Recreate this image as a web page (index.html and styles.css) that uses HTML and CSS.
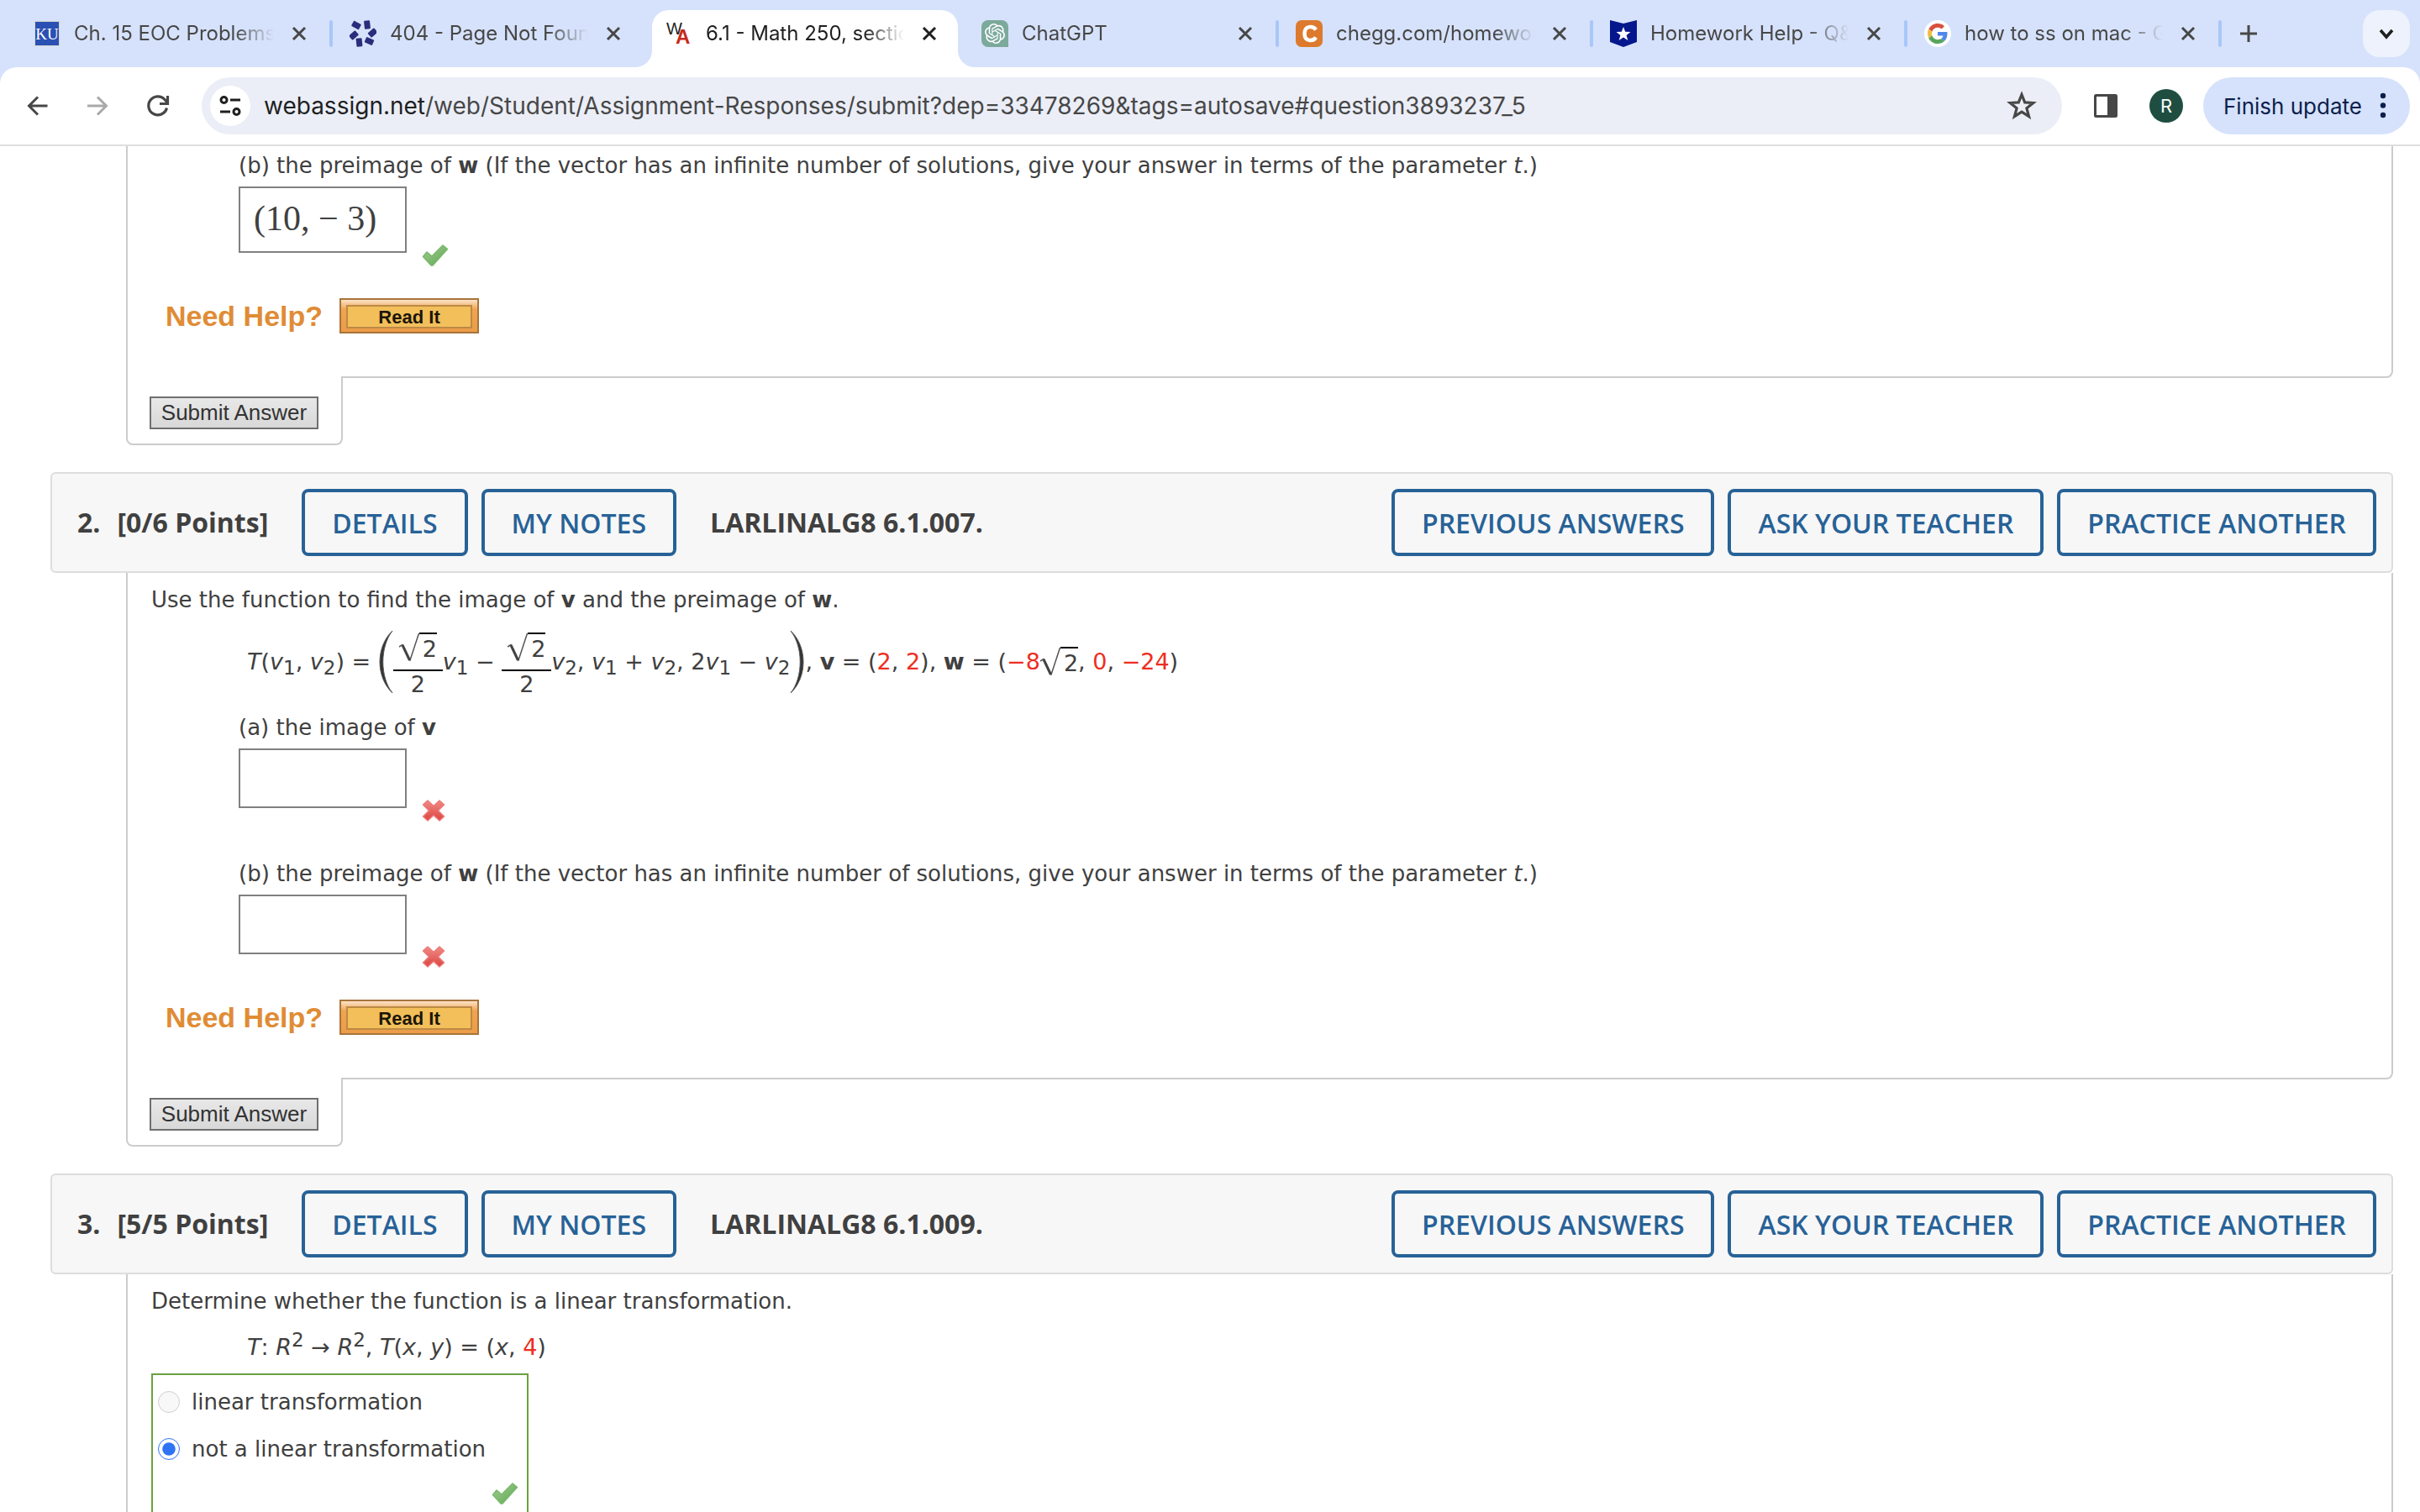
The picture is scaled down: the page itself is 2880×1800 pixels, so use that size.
FILE: index.html
```
<!DOCTYPE html>
<html lang="en">
<head>
    <meta charset="UTF-8">
    <meta name="viewport" content="width=device-width, initial-scale=1.0">
    <title>6.1 - Math 250, section 6</title>
    <link rel="stylesheet" href="styles.css">
</head>
<body>
    <svg width="0" height="0" class="defs">
        <defs>
            <linearGradient id="greenFill" x1="0" y1="0" x2="1" y2="1">
                <stop offset="0" stop-color="#a3d191"/>
                <stop offset="1" stop-color="#5fa354"/>
            </linearGradient>
            <linearGradient id="redFill" x1="0" y1="0" x2="0" y2="1">
                <stop offset="0" stop-color="#f08a86"/>
                <stop offset="1" stop-color="#dc4540"/>
            </linearGradient>
        </defs>
        <symbol id="close" viewBox="0 0 32 32">
            <path d="M9 9l14 14M23 9L9 23" stroke="currentColor" stroke-width="3" fill="none"/>
        </symbol>
        <symbol id="check" viewBox="0 0 32 26">
            <path d="M1.500 14.500L6 9l6 5L25 1l5.500 4.500L13 25h-2z" fill="url(#greenFill)" stroke="#79b96c" stroke-width="1.500" stroke-linejoin="round"/>
        </symbol>
        <symbol id="cross" viewBox="0 0 28 26">
            <path d="M7 1l7 6.500L21 1l5.500 5-7 7 7 7-5.500 5-7-6.500L7 25l-5.500-5 7-7-7-7z" fill="url(#redFill)" stroke="#ec7a76" stroke-width="1.500" stroke-linejoin="round"/>
        </symbol>
        <symbol id="radical" viewBox="0 0 24 34">
            <path d="M0 17l4-2.500L13 33 23.500 1" stroke="#555" stroke-width="1.500" fill="none"/>
            <path d="M4 15l8.500 18" stroke="#444" stroke-width="3" fill="none"/>
        </symbol>
        <symbol id="paren" viewBox="0 0 18 76">
            <path d="M17 1C-3 20-3 56 17 75 2 56 2 20 17 1z" fill="#333" stroke="#555" stroke-width="1"/>
        </symbol>
    </svg>

    <header class="tab-strip">
        <div class="tab first">
            <svg class="favicon" viewBox="0 0 32 32">
                <rect x="1" y="1" width="30" height="30" fill="#d5d3cf"/>
                <rect x="2" y="2" width="28" height="28" fill="#2a50b4"/>
                <text x="16" y="23" class="fav-ku">KU</text>
            </svg>
            <span class="tab-title">Ch. 15 EOC Problems</span>
            <button class="tab-close" aria-label="Close tab"><svg><use href="#close"/></svg></button>
        </div>
        <div class="tab">
            <svg class="favicon" viewBox="0 0 32 32" fill="#292e7c">
                <rect x="-5" y="-3.500" width="10" height="7" rx="1" transform="translate(8 6) rotate(28)"/>
                <rect x="-5" y="-3.500" width="10" height="7" rx="1" transform="translate(21 5.500) rotate(84)"/>
                <rect x="-5" y="-3.500" width="10" height="7" rx="1" transform="translate(27.500 15) rotate(-42)"/>
                <rect x="-5" y="-3.500" width="10" height="7" rx="1" transform="translate(23.500 25) rotate(25)"/>
                <rect x="-5" y="-3.500" width="10" height="7" rx="1" transform="translate(11.500 26.500) rotate(84)"/>
                <rect x="-5" y="-3.500" width="10" height="7" rx="1" transform="translate(5 18) rotate(-42)"/>
            </svg>
            <span class="tab-title">404 - Page Not Found</span>
            <button class="tab-close" aria-label="Close tab"><svg><use href="#close"/></svg></button>
        </div>
        <div class="tab active">
            <svg class="tab-shape" viewBox="0 0 404 68"><path d="M0 68A20 20 0 0 0 20 48V20A20 20 0 0 1 40 0H364A20 20 0 0 1 384 20V48A20 20 0 0 0 404 68Z" fill="#fff"/></svg>
            <svg class="favicon" viewBox="0 0 32 32">
                <text x="1" y="17" class="fav-w">W</text>
                <text x="12" y="28" class="fav-a">A</text>
            </svg>
            <span class="tab-title">6.1 - Math 250, section 6</span>
            <button class="tab-close" aria-label="Close tab"><svg><use href="#close"/></svg></button>
        </div>
        <div class="tab after-active">
            <svg class="favicon" viewBox="0 0 32 32">
                <path d="M8 0h16a8 8 0 0 1 8 8v24H8a8 8 0 0 1-8-8V8a8 8 0 0 1 8-8z" fill="#7ba99b"/>
                <g transform="translate(4 4)"><path fill="#fff" d="M22.2819 9.8211a5.9847 5.9847 0 0 0-.5157-4.9108 6.0462 6.0462 0 0 0-6.5098-2.9A6.0651 6.0651 0 0 0 4.9807 4.1818a5.9847 5.9847 0 0 0-3.9977 2.9 6.0462 6.0462 0 0 0 .7427 7.0966 5.98 5.98 0 0 0 .511 4.9107 6.051 6.051 0 0 0 6.5146 2.9001A5.9847 5.9847 0 0 0 13.2599 24a6.0557 6.0557 0 0 0 5.7718-4.2058 5.9894 5.9894 0 0 0 3.9977-2.9001 6.0557 6.0557 0 0 0-.7475-7.0729zm-9.022 12.6081a4.4755 4.4755 0 0 1-2.8764-1.0408l.1419-.0804 4.7783-2.7582a.7948.7948 0 0 0 .3927-.6813v-6.7369l2.02 1.1686a.071.071 0 0 1 .038.052v5.5826a4.504 4.504 0 0 1-4.4945 4.4944zm-9.6607-4.1254a4.4708 4.4708 0 0 1-.5346-3.0137l.142.0852 4.783 2.7582a.7712.7712 0 0 0 .7806 0l5.8428-3.3685v2.3324a.0804.0804 0 0 1-.0332.0615L9.74 19.9502a4.4992 4.4992 0 0 1-6.1408-1.6464zM2.3408 7.8956a4.485 4.485 0 0 1 2.3655-1.9728V11.6a.7664.7664 0 0 0 .3879.6765l5.8144 3.3543-2.0201 1.1685a.0757.0757 0 0 1-.071 0l-4.8303-2.7865A4.504 4.504 0 0 1 2.3408 7.872zm16.5963 3.8558L13.1038 8.364 15.1192 7.2a.0757.0757 0 0 1 .071 0l4.8303 2.7913a4.4944 4.4944 0 0 1-.6765 8.1042v-5.6772a.79.79 0 0 0-.407-.667zm2.0107-3.0231l-.142-.0852-4.7735-2.7818a.7759.7759 0 0 0-.7854 0L9.409 9.2297V6.8974a.0662.0662 0 0 1 .0284-.0615l4.8303-2.7866a4.4992 4.4992 0 0 1 6.6802 4.66zM8.3065 12.863l-2.02-1.1638a.0804.0804 0 0 1-.038-.0567V6.0742a4.4992 4.4992 0 0 1 7.3757-3.4537l-.142.0805L8.704 5.459a.7948.7948 0 0 0-.3927.6813zm1.0976-2.3654l2.602-1.4998 2.6069 1.4998v2.9994l-2.5974 1.4997-2.6067-1.4997Z"/></g>
            </svg>
            <span class="tab-title">ChatGPT</span>
            <button class="tab-close" aria-label="Close tab"><svg><use href="#close"/></svg></button>
        </div>
        <div class="tab">
            <svg class="favicon" viewBox="0 0 32 32">
                <rect width="32" height="32" rx="7" fill="#dd7a2e"/>
                <path d="M24 11.500C21 6.500 10.500 6 10.500 16S21 25.500 24 20.500" fill="none" stroke="#fff" stroke-width="4.500"/>
            </svg>
            <span class="tab-title">chegg.com/homework-help</span>
            <button class="tab-close" aria-label="Close tab"><svg><use href="#close"/></svg></button>
        </div>
        <div class="tab">
            <svg class="favicon" viewBox="0 0 32 32">
                <path d="M0 0l16 4L32 0v26l-16 6L0 26z" fill="#06168c"/>
                <path d="M16 8l2.200 5.800 6.300.3-4.900 3.900 1.700 6-5.300-3.400-5.300 3.400 1.700-6-4.900-3.900 6.300-.3z" fill="#fff"/>
            </svg>
            <span class="tab-title">Homework Help - Q&amp;A from</span>
            <button class="tab-close" aria-label="Close tab"><svg><use href="#close"/></svg></button>
        </div>
        <div class="tab">
            <svg class="favicon" viewBox="0 0 32 32">
                <circle cx="16" cy="16" r="16" fill="#fff"/>
                <g transform="translate(4 4) scale(.5)">
                    <path fill="#d9503f" d="M24 9.500c3.540 0 6.710 1.220 9.210 3.600l6.850-6.850C35.900 2.380 30.470 0 24 0 14.620 0 6.510 5.380 2.560 13.220l7.980 6.190C12.430 13.720 17.740 9.500 24 9.500z"/>
                    <path fill="#5087ec" d="M46.980 24.550c0-1.570-.15-3.090-.38-4.550H24v9.020h12.940c-.58 2.960-2.260 5.480-4.780 7.180l7.730 6c4.510-4.180 7.090-10.360 7.090-17.650z"/>
                    <path fill="#f1bd42" d="M10.530 28.590c-.48-1.450-.76-2.990-.76-4.590s.27-3.140.76-4.590l-7.980-6.190C.92 16.460 0 20.120 0 24c0 3.880.92 7.540 2.560 10.780l7.970-6.190z"/>
                    <path fill="#58a55c" d="M24 48c6.480 0 11.930-2.130 15.890-5.810l-7.730-6c-2.150 1.450-4.920 2.300-8.160 2.300-6.260 0-11.570-4.220-13.470-9.910l-7.980 6.190C6.510 42.620 14.620 48 24 48z"/>
                </g>
            </svg>
            <span class="tab-title">how to ss on mac - Google</span>
            <button class="tab-close" aria-label="Close tab"><svg><use href="#close"/></svg></button>
        </div>
        <button class="new-tab" aria-label="New tab"><svg viewBox="0 0 32 32"><path d="M16 6v20M6 16h20" stroke="currentColor" stroke-width="3"/></svg></button>
        <button class="tab-search" aria-label="Search tabs"><svg viewBox="0 0 32 32"><path d="M9 12l7 8 7-8" stroke="currentColor" stroke-width="3.500" fill="none"/></svg></button>
    </header>

    <div class="toolbar-wrap">
        <div class="toolbar">
            <button class="nav-btn" aria-label="Back"><svg viewBox="0 0 40 40"><path d="M21 9.500L10.500 20 21 30.500M10 20h22.500" stroke="currentColor" stroke-width="3" fill="none"/></svg></button>
            <button class="nav-btn faded" aria-label="Forward"><svg viewBox="0 0 40 40"><path d="M20 9.500L30.500 20 20 30.500M31 20H8" stroke="currentColor" stroke-width="3" fill="none"/></svg></button>
            <button class="nav-btn" aria-label="Reload"><svg viewBox="0 0 40 40"><path d="M30.500 22.500A11 11 0 1 1 28 12.500l3 3.500M31.500 8v9.500H22" stroke="currentColor" stroke-width="3.200" fill="none"/></svg></button>
            <div class="omnibox">
                <button class="site-info" aria-label="Site information">
                    <svg viewBox="0 0 48 48" fill="none" stroke="#1f1f1f" stroke-width="3">
                        <circle cx="16.500" cy="17" r="3.500"/><path d="M24 17h12M12 31h12"/><circle cx="31.500" cy="31" r="3.500"/>
                    </svg>
                </button>
                <span class="url"><b>webassign.net</b>/web/Student/Assignment-Responses/submit?dep=33478269&amp;tags=autosave#question3893237_5</span>
                <button class="star" aria-label="Bookmark"><svg viewBox="0 0 40 40"><path d="M20 6.500l3.700 9.400 10 .6-7.800 6.300 2.700 9.900L20 27.200l-8.600 5.500 2.700-9.900-7.800-6.300 10-.6z" fill="none" stroke="#474747" stroke-width="3.200"/></svg></button>
            </div>
            <button class="panel-btn" aria-label="Side panel"><svg viewBox="0 0 40 40"><rect x="7.500" y="7.500" width="25" height="25" rx="1" fill="none" stroke="#474747" stroke-width="3"/><path d="M22 7h11v26H22z" fill="#474747"/></svg></button>
            <button class="avatar">R</button>
            <button class="update-btn">Finish update
                <svg viewBox="0 0 8 32" fill="#0b1f4b"><circle cx="4" cy="4" r="3.200"/><circle cx="4" cy="15.500" r="3.200"/><circle cx="4" cy="27" r="3.200"/></svg>
            </button>
        </div>
    </div>

    <main class="page">
        <section class="question">
            <div class="question-body continued">
                <div class="part">
                    <label for="q1b">(b) the preimage of <b>w</b> (If the vector has an infinite number of solutions, give your answer in terms of the parameter <i>t</i>.)</label>
                    <div class="answer-row">
                        <input type="text" id="q1b" class="answer filled" value="(10, − 3)">
                        <svg class="mark-check"><use href="#check"/></svg>
                    </div>
                </div>
                <div class="help-row">
                    <span class="need-help">Need Help?</span>
                    <button class="read-it"><span>Read It</span></button>
                </div>
            </div>
            <div class="submit-tab"><button class="submit-btn">Submit Answer</button></div>
        </section>

        <section class="question">
            <div class="question-header">
                <span class="number">2.</span>
                <span class="points">[0/6 Points]</span>
                <button class="header-btn">DETAILS</button>
                <button class="header-btn">MY NOTES</button>
                <span class="code">LARLINALG8 6.1.007.</span>
                <button class="header-btn">PREVIOUS ANSWERS</button>
                <button class="header-btn">ASK YOUR TEACHER</button>
                <button class="header-btn">PRACTICE ANOTHER</button>
            </div>
            <div class="question-body">
                <p>Use the function to find the image of <b>v</b> and the preimage of <b>w</b>.</p>
                <div class="formula tall">
                    <span><i>T</i>(<i>v</i><sub>1</sub>, <i>v</i><sub>2</sub>) =&nbsp;</span>
                    <svg class="paren"><use href="#paren"/></svg>
                    <span class="frac"><span class="sqrt"><svg><use href="#radical"/></svg><span class="radicand">2</span></span><span class="denom">2</span></span>
                    <span><i>v</i><sub>1</sub> −&nbsp;</span>
                    <span class="frac"><span class="sqrt"><svg><use href="#radical"/></svg><span class="radicand">2</span></span><span class="denom">2</span></span>
                    <span><i>v</i><sub>2</sub>, <i>v</i><sub>1</sub> + <i>v</i><sub>2</sub>, 2<i>v</i><sub>1</sub> − <i>v</i><sub>2</sub></span>
                    <svg class="paren right"><use href="#paren"/></svg>
                    <span>, <b>v</b> = (<em>2</em>, <em>2</em>), <b>w</b> = (<em>−8</em></span>
                    <span class="sqrt"><svg><use href="#radical"/></svg><span class="radicand">2</span></span>
                    <span>, <em>0</em>, <em>−24</em>)</span>
                </div>
                <div class="part">
                    <label for="q2a">(a) the image of <b>v</b></label>
                    <div class="answer-row">
                        <input type="text" id="q2a" class="answer">
                        <svg class="mark-cross"><use href="#cross"/></svg>
                    </div>
                </div>
                <div class="part">
                    <label for="q2b">(b) the preimage of <b>w</b> (If the vector has an infinite number of solutions, give your answer in terms of the parameter <i>t</i>.)</label>
                    <div class="answer-row">
                        <input type="text" id="q2b" class="answer">
                        <svg class="mark-cross"><use href="#cross"/></svg>
                    </div>
                </div>
                <div class="help-row">
                    <span class="need-help">Need Help?</span>
                    <button class="read-it"><span>Read It</span></button>
                </div>
            </div>
            <div class="submit-tab"><button class="submit-btn">Submit Answer</button></div>
        </section>

        <section class="question">
            <div class="question-header">
                <span class="number">3.</span>
                <span class="points">[5/5 Points]</span>
                <button class="header-btn">DETAILS</button>
                <button class="header-btn">MY NOTES</button>
                <span class="code">LARLINALG8 6.1.009.</span>
                <button class="header-btn">PREVIOUS ANSWERS</button>
                <button class="header-btn">ASK YOUR TEACHER</button>
                <button class="header-btn">PRACTICE ANOTHER</button>
            </div>
            <div class="question-body">
                <p>Determine whether the function is a linear transformation.</p>
                <div class="formula">
                    <span><i>T</i>: <i>R</i><sup>2</sup> → <i>R</i><sup>2</sup>, <i>T</i>(<i>x</i>, <i>y</i>) = (<i>x</i>, <em>4</em>)</span>
                </div>
                <div class="choices">
                    <label class="choice"><input type="radio" name="q3" disabled> linear transformation</label>
                    <label class="choice"><input type="radio" name="q3" checked> not a linear transformation</label>
                    <svg class="mark-check"><use href="#check"/></svg>
                </div>
            </div>
        </section>
    </main>
</body>
</html>
```

FILE: styles.css
```
* {
    margin: 0;
    padding: 0;
    box-sizing: border-box;
}

body {
    height: 100vh;
    display: flex;
    flex-direction: column;
    overflow: hidden;
    background: #fff;
    color: #404040;
    font-family: Verdana, 'DejaVu Sans', sans-serif;
    font-size: 26px;
    line-height: 32px;
}

button {
    border: none;
    background: none;
    color: inherit;
    cursor: pointer;
}

.defs {
    position: absolute;
}

/* Tab strip */
.tab-strip {
    display: flex;
    align-items: center;
    flex-shrink: 0;
    height: 80px;
    padding: 0 12px 0 16px;
    background: #d6e2fb;
    color: #474747;
    font-family: Inter, sans-serif;
    font-size: 24px;
}

.tab {
    position: relative;
    display: flex;
    align-items: center;
    width: 374px;
    height: 80px;
    padding-right: 20px;
}

.tab::before {
    content: "";
    width: 4px;
    height: 32px;
    margin-right: 20px;
    border-radius: 2px;
    background: #a8c7fa;
}

.tab.first::before,
.tab.active::before,
.tab.after-active::before {
    background: transparent;
}

.tab.first {
    width: 376px;
}

.tab.active {
    margin: 0 2px;
    color: #1f1f1f;
}

.tab-shape {
    position: absolute;
    left: -12px;
    bottom: 0;
    width: 404px;
    height: 68px;
}

.favicon {
    position: relative;
    width: 32px;
    height: 32px;
    margin-right: 16px;
}

.fav-ku {
    fill: #fff;
    font-family: 'Liberation Serif', serif;
    font-size: 19px;
    text-anchor: middle;
}

.fav-w {
    fill: #222;
    font-family: 'Liberation Sans', sans-serif;
    font-size: 20px;
}

.fav-a {
    fill: #c9281c;
    font-family: 'Liberation Sans', sans-serif;
    font-size: 24px;
    font-weight: bold;
}

.tab-title {
    position: relative;
    flex: 1;
    overflow: hidden;
    white-space: nowrap;
    margin-right: 14px;
    mask-image: linear-gradient(to right, #000 calc(100% - 48px), transparent);
}

.tab-close,
.new-tab {
    position: relative;
    width: 32px;
    height: 32px;
}

.tab-close svg,
.new-tab svg,
.tab-search svg {
    display: block;
    width: 32px;
    height: 32px;
}

.tab-strip::after {
    content: "";
    order: 1;
    width: 4px;
    height: 32px;
    border-radius: 2px;
    background: #a8c7fa;
}

.new-tab {
    order: 2;
    margin-left: 16px;
}

.tab-search {
    order: 3;
    display: flex;
    align-items: center;
    justify-content: center;
    width: 56px;
    height: 56px;
    margin-left: auto;
    border-radius: 20px;
    background: #edf2fc;
    color: #1f1f1f;
}

/* Toolbar */
.toolbar-wrap {
    flex-shrink: 0;
    background: #d6e2fb;
}

.toolbar {
    display: flex;
    align-items: center;
    height: 94px;
    padding: 0 12px 0 24px;
    border-bottom: 2px solid #dfdfdf;
    border-radius: 20px 20px 0 0;
    background: #fff;
    color: #474747;
    font-family: Inter, sans-serif;
}

.nav-btn {
    width: 40px;
    height: 40px;
    margin-right: 32px;
}

.nav-btn.faded {
    color: #a9a9a9;
}

.omnibox {
    display: flex;
    align-items: center;
    flex: 1;
    height: 68px;
    padding: 0 28px 0 10px;
    border-radius: 34px;
    background: #ebeef7;
}

.site-info {
    width: 48px;
    height: 48px;
    margin-right: 16px;
    border-radius: 50%;
    background: #fff;
}

.url {
    flex: 1;
    font-size: 28px;
}

.url b {
    color: #1f1f1f;
    font-weight: normal;
}

.star,
.panel-btn {
    width: 40px;
    height: 40px;
}

.panel-btn {
    margin: 0 32px;
}

.avatar {
    width: 40px;
    height: 40px;
    margin-right: 24px;
    border-radius: 50%;
    background: #1f4e41;
    color: #fff;
    font-family: Inter, sans-serif;
    font-size: 22px;
}

.update-btn {
    display: flex;
    align-items: center;
    justify-content: space-between;
    width: 246px;
    height: 68px;
    padding: 0 28px 0 24px;
    border-radius: 34px;
    background: #d6e2fb;
    color: #0b1f4b;
    font-family: Inter, sans-serif;
    font-size: 26px;
}

.update-btn svg {
    width: 8px;
    height: 32px;
}

/* Assignment page */
.page {
    flex: 1;
    overflow: hidden;
    padding: 0 32px 0 60px;
}

.question {
    margin-bottom: 32px;
}

.question-header {
    display: flex;
    align-items: center;
    gap: 16px;
    height: 120px;
    padding: 0 18px 0 30px;
    border: 2px solid #ddd;
    border-radius: 6px;
    background: #f7f7f7;
    font-family: 'Open Sans', sans-serif;
    font-size: 32px;
    font-weight: bold;
}

.points {
    margin: 0 24px 0 4px;
}

.code {
    margin-left: 24px;
    margin-right: auto;
}

.header-btn {
    height: 80px;
    padding: 0 32px;
    border: 4px solid #276297;
    border-radius: 8px;
    color: #276297;
    font-family: 'Open Sans', sans-serif;
    font-size: 32px;
    font-weight: 600;
}

.question-body {
    margin-left: 90px;
    padding: 16px 28px 51px;
    border: 2px solid #ccc;
    border-top: none;
    border-radius: 0 0 8px 0;
}

.question-body.continued {
    padding-top: 7px;
}

.part {
    margin-left: 104px;
}

.part + .part {
    margin-top: 46px;
}

.part label {
    display: block;
}

.answer-row {
    display: flex;
    align-items: flex-end;
    gap: 18px;
    margin-top: 9px;
}

.answer {
    width: 200px;
    height: 71px;
    margin-bottom: 16px;
    padding: 0 16px 4px;
    border: 2px solid #808080;
    color: #404040;
    font-family: 'Liberation Serif', serif;
    font-size: 42px;
}

.answer.filled {
    height: 79px;
}

.mark-check {
    width: 32px;
    height: 26px;
}

.mark-cross {
    width: 28px;
    height: 26px;
}

.help-row {
    display: flex;
    align-items: center;
    gap: 20px;
    margin: 38px 0 0 17px;
}

.need-help {
    color: #e08c35;
    font-family: 'Liberation Sans', sans-serif;
    font-size: 34px;
    font-weight: bold;
}

.read-it {
    width: 166px;
    height: 42px;
    padding: 6px;
    border: 2px solid #a8743a;
    background: linear-gradient(#fbe3c8, #f0a452 30%, #ec9c48);
}

.read-it span {
    display: block;
    height: 28px;
    border: 2px solid #bd8a45;
    background: #f2bf5b;
    color: #1c1608;
    font-family: 'Liberation Sans', sans-serif;
    font-size: 22px;
    font-weight: bold;
    line-height: 26px;
}

.submit-tab {
    position: relative;
    width: 258px;
    margin: -2px 0 0 90px;
    padding: 24px 26px 17px;
    border: 2px solid #ccc;
    border-top: none;
    border-radius: 0 0 8px 8px;
    background: #fff;
}

.submit-btn {
    display: block;
    width: 201px;
    height: 39px;
    border: 2px solid #6f6f6f;
    background: linear-gradient(#e8e8e8, #d8d8d8);
    color: #333;
    font-family: 'Liberation Sans', sans-serif;
    font-size: 26px;
}

/* Formulas */
.formula {
    display: flex;
    align-items: center;
    margin: 23px 0 15px 114px;
    font-size: 27px;
    white-space: nowrap;
}

.formula.tall {
    margin: 15px 0 19px 114px;
}

.formula em {
    color: #ee2e22;
    font-style: normal;
}

sub,
sup {
    font-size: 23px;
    line-height: 0;
}

sub {
    vertical-align: -6px;
}

sup {
    vertical-align: 10px;
}

.paren {
    width: 18px;
    height: 76px;
}

.paren.right {
    transform: scaleX(-1);
}

.frac {
    display: flex;
    flex-direction: column;
    align-items: center;
    width: 59px;
    padding-top: 8px;
}

.frac .sqrt {
    height: 44px;
}

.denom {
    align-self: stretch;
    border-top: 2px solid #000;
    text-align: center;
}

.sqrt {
    display: flex;
    align-items: flex-start;
}

.sqrt svg {
    width: 24px;
    height: 34px;
}

.radicand {
    padding: 2px 0 0 4px;
    border-top: 2px solid #000;
}

/* Multiple choice */
.choices {
    display: flex;
    flex-direction: column;
    gap: 24px;
    width: 449px;
    height: 240px;
    padding: 16px 10px 16px 6px;
    border: 2px solid #6aa142;
}

.choice {
    display: flex;
    align-items: center;
    gap: 14px;
}

.choice input {
    width: 26px;
    height: 26px;
    accent-color: #2f74f5;
}

.choices .mark-check {
    align-self: flex-end;
}
```
